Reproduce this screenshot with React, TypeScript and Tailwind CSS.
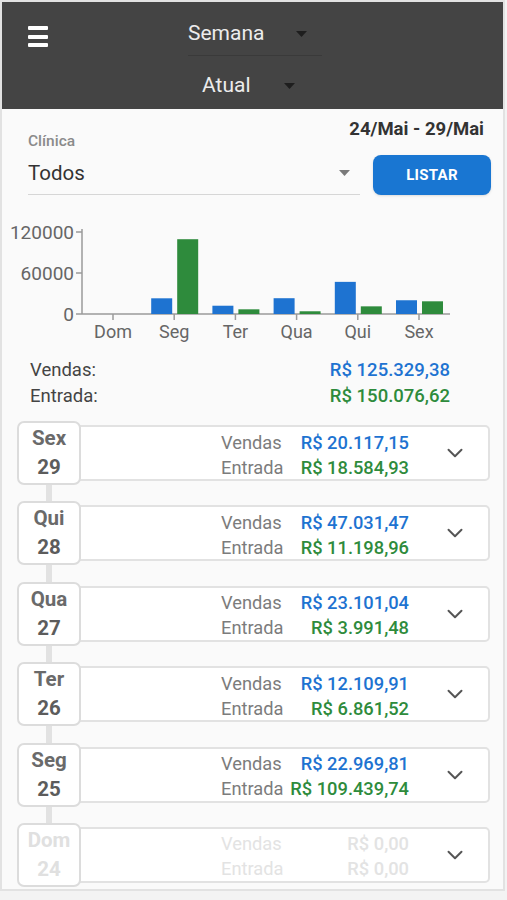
import React from 'react';
import { ChevronDown } from 'lucide-react';

const days = [
  { dow: 'Dom', label: 'Dom', n: 24, vendas: 0, entrada: 0 },
  { dow: 'Seg', label: 'Seg', n: 25, vendas: 22969.81, entrada: 109439.74 },
  { dow: 'Ter', label: 'Ter', n: 26, vendas: 12109.91, entrada: 6861.52 },
  { dow: 'Qua', label: 'Qua', n: 27, vendas: 23101.04, entrada: 3991.48 },
  { dow: 'Qui', label: 'Qui', n: 28, vendas: 47031.47, entrada: 11198.96 },
  { dow: 'Sex', label: 'Sex', n: 29, vendas: 20117.15, entrada: 18584.93 },
];

const brl = (v: number) =>
  'R$ ' +
  v.toLocaleString('pt-BR', { minimumFractionDigits: 2, maximumFractionDigits: 2 });

const Caret = ({ className }: { className: string }) => (
  <svg width="11" height="6" viewBox="0 0 11 6" className={className}>
    <path d="M0 0h11L5.5 6z" fill="currentColor" />
  </svg>
);

// svg coords = page coords shifted by (-2, -218)
const Chart = () => {
  const y0 = 97;
  const k = 82 / 120000;
  const cx = (i: number) => 111 + i * 61.2;
  return (
    <svg width="501" height="130" className="block">
      <line x1="80" y1="12" x2="80" y2={y0} stroke="#9a9a9a" strokeWidth="1.5" />
      <line x1="80" y1={y0} x2="448" y2={y0} stroke="#9a9a9a" strokeWidth="1.5" />
      {[
        ['120000', 15],
        ['60000', 56],
        ['0', 97],
      ].map(([t, y]) => (
        <g key={t as string}>
          <line x1="74" y1={y as number} x2="80" y2={y as number} stroke="#9a9a9a" strokeWidth="1.5" />
          <text x="72" y={(y as number) + 7} textAnchor="end" fontSize="19" fill="#666">
            {t}
          </text>
        </g>
      ))}
      {days.map((d, i) => {
        const c = cx(i);
        const hv = d.vendas * k;
        const he = d.entrada * k;
        return (
          <g key={d.dow}>
            <line x1={c} y1={y0} x2={c} y2={y0 + 6} stroke="#9a9a9a" strokeWidth="1.5" />
            <text x={c} y={y0 + 24} textAnchor="middle" fontSize="18" fill="#666">
              {d.label}
            </text>
            {hv > 0 && <rect x={c - 23} y={y0 - hv} width="21" height={hv} fill="#1e73d1" />}
            {he > 0 && <rect x={c + 3} y={y0 - he} width="21" height={he} fill="#2e8b3c" />}
          </g>
        );
      })}
    </svg>
  );
};

const DayRow = ({ d, last }: { d: (typeof days)[number]; last: boolean }) => {
  const empty = d.vendas === 0 && d.entrada === 0;
  return (
    <div>
      <div className="flex items-center">
        <div className="relative z-10 w-[64px] h-[64px] shrink-0 rounded-[7px] border-2 border-[#dcdcdc] bg-white flex flex-col items-center justify-center text-[20.5px] font-bold leading-[29px]">
          <span className={empty ? 'text-[#e0e0e0]' : 'text-[#6a6a6a]'}>{d.dow}</span>
          <span className={empty ? 'text-[#e0e0e0]' : 'text-[#5c5c5c]'}>{d.n}</span>
        </div>
        <div className="-ml-[2px] flex-1 h-[56px] rounded-r-[5px] border-2 border-[#e2e2e2] bg-white flex items-center justify-end">
          <div className="w-[188px] grid grid-cols-[auto_1fr] text-[18.3px] leading-[25px] mt-[3px]">
            <span className={empty ? 'text-[#e3e3e3]' : 'text-[#7c7c7c]'}>Vendas</span>
            <span className={`text-right font-medium ${empty ? 'text-[#e3e3e3]' : 'text-[#1e73d1]'}`}>{brl(d.vendas)}</span>
            <span className={empty ? 'text-[#e3e3e3]' : 'text-[#7c7c7c]'}>Entrada</span>
            <span className={`text-right font-medium ${empty ? 'text-[#e3e3e3]' : 'text-[#2e8b3c]'}`}>{brl(d.entrada)}</span>
          </div>
          <div className="w-[79px] flex justify-center pl-[13px]">
            <ChevronDown size={26} strokeWidth={1.8} className="text-[#555]" />
          </div>
        </div>
      </div>
      {!last && <div className="ml-[29px] w-[6px] h-[16.4px] bg-[#e2e2e2]" />}
    </div>
  );
};

export default function App() {
  const list = [...days].reverse();
  return (
    <div className="w-[507px] h-[900px] bg-[#f3f3f3] font-['Roboto','Liberation_Sans',sans-serif]">
      <div className="w-[505px] h-[891px] border-2 border-[#e2e2e2] bg-[#fafafa]">
        <header className="h-[107px] bg-[#444444] flex">
          <div className="pl-[26px] pt-[24px] flex flex-col gap-[4.5px]">
            <div className="w-[20px] h-[4px] bg-white rounded-[1px]" />
            <div className="w-[20px] h-[4px] bg-white rounded-[1px]" />
            <div className="w-[20px] h-[4px] bg-white rounded-[1px]" />
          </div>
          <div className="ml-[140px] pt-[10px] flex flex-col">
            <div className="w-[134px] h-[44px] border-b border-[#3a3a3a] flex items-center justify-between pr-[15px]">
              <span className="text-[21px] text-[#ececec]">Semana</span>
              <Caret className="text-[#1e1e1e]" />
            </div>
            <div className="mt-[7px] ml-[14px] w-[106px] h-[46px] flex items-center justify-between pr-[13px]">
              <span className="text-[21px] text-[#ececec]">Atual</span>
              <Caret className="text-[#1e1e1e]" />
            </div>
          </div>
        </header>

        <section className="pl-[26px] pr-[12px]">
          <div className="pt-[9px] pr-[7px] text-right text-[18.5px] leading-[22px] font-bold text-[#333]">
            24/Mai - 29/Mai
          </div>
          <div className="-mt-[7px] flex items-end gap-[13px]">
            <div className="w-[332px] border-b border-[#d6d6d6]">
              <div className="text-[15.5px] leading-[16px] font-medium text-[#8a8a8a]">Clínica</div>
              <div className="mt-[10px] pb-[7px] flex items-center justify-between pr-[10px]">
                <span className="text-[20.5px] leading-[28px] text-[#333]">Todos</span>
                <Caret className="text-[#7a7a7a]" />
              </div>
            </div>
            <button className="w-[118px] h-[40px] rounded-[8px] bg-[#1976d2] text-white text-[15px] font-bold tracking-[0.3px] shadow-sm">
              LISTAR
            </button>
          </div>
        </section>

        <div className="mt-[22px]">
          <Chart />
        </div>

        <div className="mt-[10px] pl-[28px] pr-[53px] text-[18.5px] leading-[26px]">
          <div className="flex justify-between">
            <span className="text-[#444]">Vendas:</span>
            <span className="font-medium text-[#1e73d1]">R$ 125.329,38</span>
          </div>
          <div className="flex justify-between">
            <span className="text-[#444]">Entrada:</span>
            <span className="font-medium text-[#2e8b3c]">R$ 150.076,62</span>
          </div>
        </div>

        <div className="mt-[12px] pl-[15px] pr-[13px]">
          {list.map((d, i) => (
            <DayRow key={d.dow} d={d} last={i === list.length - 1} />
          ))}
        </div>
      </div>
    </div>
  );
}
